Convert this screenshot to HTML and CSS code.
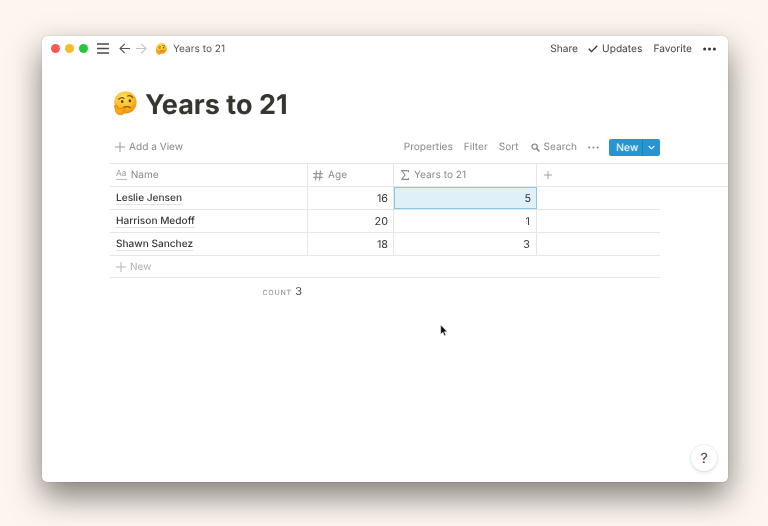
FILE: index.html
```html
<!DOCTYPE html>
<html lang="en">
<head>
<meta charset="utf-8">
<title>Years to 21</title>
<link rel="stylesheet" href="styles.css">
</head>
<body>
<svg class="defs" width="0" height="0" aria-hidden="true">
  <defs>
    <radialGradient id="face" cx="42%" cy="28%" r="80%">
      <stop offset="0" stop-color="#ffe25c"/>
      <stop offset="0.55" stop-color="#fdbd2c"/>
      <stop offset="1" stop-color="#ee8208"/>
    </radialGradient>
    <symbol id="think" viewBox="0 0 26 26">
      <circle cx="14" cy="11.8" r="11.6" fill="url(#face)"/>
      <path d="M7 8.5q3-2.6 5.6-.8M16.2 5.2q3.4-1 5.4 1.6" fill="none" stroke="#7a4a12" stroke-width="1.3" stroke-linecap="round"/>
      <ellipse cx="10.6" cy="11" rx="1.4" ry="1.6" fill="#5b3a14"/>
      <ellipse cx="18.6" cy="10.2" rx="1.4" ry="1.6" fill="#5b3a14"/>
      <path d="M12 17q3.5-1.4 7 .2" fill="none" stroke="#8a5212" stroke-width="1.3" stroke-linecap="round"/>
      <path d="M2.6 15.5q1.4-1.6 2.6-.2l1.6 3.4 6-1.2q2 .2 1.2 1.8l-2.6 1.2 1.2 1.6q-.4 2.4-3 2.6-4.4.4-5.6-3z" fill="#fda818" stroke="#dc7f0c" stroke-width=".8"/>
    </symbol>
  </defs>
</svg>
<div class="window">
  <header class="topbar">
    <div class="traffic">
      <span class="dot dot-red"></span>
      <span class="dot dot-yellow"></span>
      <span class="dot dot-green"></span>
    </div>
    <svg class="ic-menu" width="12" height="11" viewBox="0 0 12 11"><path d="M0 1h12M0 5.5h12M0 10h12" stroke="#4a4946" stroke-width="1.3" fill="none"/></svg>
    <svg class="ic-back" width="11" height="11" viewBox="0 0 11 11"><path d="M11 5.5H1M5.8.8L1 5.5l4.800 4.700" stroke="#55534f" stroke-width="1.100" fill="none"/></svg>
    <svg class="ic-fwd" width="11" height="11" viewBox="0 0 11 11"><path d="M0 5.500h10M5.200.8L10 5.500l-4.800 4.700" stroke="#c4c3c1" stroke-width="1.100" fill="none"/></svg>
    <svg class="emoji-small" width="12" height="12"><use href="#think"/></svg>
    <span class="crumb">Years to 21</span>
    <div class="top-actions">
      <span class="top-link share">Share</span>
      <span class="top-link updates">
        <svg width="10" height="8" viewBox="0 0 10 8"><path d="M.7 3.800l2.800 2.800L9.300.8" stroke="#37352f" stroke-width="1.300" fill="none"/></svg>
        Updates
      </span>
      <span class="top-link">Favorite</span>
      <svg class="more" width="13" height="4" viewBox="0 0 13 4"><circle cx="1.600" cy="2" r="1.500"/><circle cx="6.500" cy="2" r="1.500"/><circle cx="11.400" cy="2" r="1.500"/></svg>
    </div>
  </header>

  <main class="page">
    <h1 class="title">
      <svg class="emoji-big" width="25" height="25"><use href="#think"/></svg>
      <span>Years to 21</span>
    </h1>

    <div class="toolbar">
      <span class="add-view">
        <svg width="10" height="10" viewBox="0 0 10 10"><path d="M5 0v10M0 5h10" stroke="#9a9995" stroke-width="1" fill="none"/></svg>
        Add a View
      </span>
      <div class="tools">
        <span>Properties</span>
        <span>Filter</span>
        <span>Sort</span>
        <span class="search">
          <svg width="9" height="9" viewBox="0 0 10 10"><circle cx="4" cy="4" r="2.900" stroke="#807f7b" stroke-width="1.300" fill="none"/><path d="M6.200 6.200L9.400 9.400" stroke="#807f7b" stroke-width="1.500"/></svg>
          Search
        </span>
        <svg class="tool-more" width="11" height="3" viewBox="0 0 11 3"><circle cx="1.300" cy="1.500" r="1.100"/><circle cx="5.500" cy="1.500" r="1.100"/><circle cx="9.700" cy="1.500" r="1.100"/></svg>
        <div class="new-btn">
          <span class="new-label">New</span>
          <span class="new-caret"><svg width="7" height="5" viewBox="0 0 7 5"><path d="M.7 1l2.800 2.800L6.300 1" stroke="#fff" stroke-width="1.100" fill="none"/></svg></span>
        </div>
      </div>
    </div>

    <div class="table">
      <div class="row head">
        <div class="cell c-name">
          <span class="aa">Aa</span>Name
        </div>
        <div class="cell c-age">
          <svg width="10" height="11" viewBox="0 0 10 11"><path d="M3.500.5L2.500 10.500M7.500.5L6.500 10.500M.2 3.600h9.600M.2 7.400h9.600" stroke="#9a9996" stroke-width="1.300" fill="none"/></svg>
          Age
        </div>
        <div class="cell c-years">
          <svg width="8" height="10" viewBox="0 0 8 10"><path d="M7.600 2.300V.6H.7l3.300 4.400L.7 9.400h6.900V7.700" stroke="#8f8e8a" stroke-width="1.100" fill="none"/></svg>
          Years to 21
        </div>
        <div class="cell c-add">
          <svg width="8" height="8" viewBox="0 0 8 8"><path d="M4 0v8M0 4h8" stroke="#a3a29f" stroke-width="1" fill="none"/></svg>
        </div>
      </div>
      <div class="row">
        <div class="cell c-name"><span class="name">Leslie Jensen</span></div>
        <div class="cell c-age num">16</div>
        <div class="cell c-years num selected">5</div>
        <div class="cell c-rest"></div>
      </div>
      <div class="row">
        <div class="cell c-name"><span class="name">Harrison Medoff</span></div>
        <div class="cell c-age num">20</div>
        <div class="cell c-years num">1</div>
        <div class="cell c-rest"></div>
      </div>
      <div class="row">
        <div class="cell c-name"><span class="name">Shawn Sanchez</span></div>
        <div class="cell c-age num">18</div>
        <div class="cell c-years num">3</div>
        <div class="cell c-rest"></div>
      </div>
      <div class="new-row">
        <svg width="10" height="10" viewBox="0 0 10 10"><path d="M5 0v10M0 5h10" stroke="#b5b4b2" stroke-width="1" fill="none"/></svg>
        New
      </div>
      <div class="count"><span class="count-label">COUNT</span><span class="count-value">3</span></div>
    </div>
  </main>

  <svg class="cursor" width="8" height="13" viewBox="0 0 9 14"><path d="M.8.800v10.400l2.500-2.300 1.700 3.900 1.600-.7-1.700-3.800h3.300z" fill="#111" stroke="#fff" stroke-width=".5"/></svg>
  <div class="help">?</div>
</div>
</body>
</html>
```
FILE: styles.css
```css
* { box-sizing: border-box; }
html, body { height: 100%; }
body {
  margin: 0;
  padding: 36px 40px 44px 42px;
  background: #fdf6f0;
  overflow: hidden;
  font-family: Inter, "Liberation Sans", sans-serif;
  color: #37352f;
  text-rendering: geometricPrecision;
}
.defs { position: absolute; }
.window {
  position: relative;
  width: 686px;
  height: 446px;
  background: #fff;
  border-radius: 5px;
  box-shadow: 0 14px 32px rgba(50, 45, 40, .62), 0 0 1px rgba(0, 0, 0, .4);
}

/* top bar */
.topbar {
  display: flex;
  align-items: center;
  height: 25px;
  padding: 0 12px 0 9px;
  filter: blur(.3px);
}
.traffic { display: flex; gap: 5px; }
.dot { width: 9px; height: 9px; border-radius: 50%; }
.dot-red { background: #fc5753; }
.dot-yellow { background: #fdb82c; }
.dot-green { background: #28c63f; }
.ic-menu { margin-left: 9px; }
.ic-back { margin-left: 10px; }
.ic-fwd { margin-left: 6px; }
.emoji-small { margin-left: 8px; }
.crumb { margin-left: 6px; font-size: 10.1px; color: #55534e; }
.top-actions { margin-left: auto; display: flex; align-items: center; gap: 11px; }
.top-link { font-size: 10.2px; color: #45433e; display: flex; align-items: center; gap: 4px; }
.share { margin-right: -1px; }
.more { fill: #37352f; }

/* page */
.page { padding-left: 68px; filter: blur(.3px); }
.title {
  display: flex;
  align-items: center;
  gap: 8px;
  height: 62px;
  margin: 0;
  padding: 25px 0 0 2px;
  font-size: 27px;
  line-height: 34px;
  font-weight: 700;
  color: #37352f;
}
.emoji-big { margin-bottom: 3px; }
.toolbar {
  display: flex;
  align-items: center;
  justify-content: space-between;
  width: 550px;
  height: 24px;
  margin-top: 12px;
  font-size: 10.1px;
  color: #8a8985;
}
.add-view { display: flex; align-items: center; gap: 4px; padding-left: 5px; }
.tools { display: flex; align-items: center; gap: 11px; }
.search { display: flex; align-items: center; gap: 4px; margin-left: 1px; }
.tool-more { fill: #8a8985; margin-right: -1px; }
.new-btn {
  display: flex;
  align-items: center;
  width: 51px;
  height: 17px;
  background: #2795d2;
  border-radius: 2px;
  color: #fff;
  font-size: 10.4px;
}
.new-label { width: 33px; padding-left: 7px; }
.new-caret {
  display: flex;
  align-items: center;
  justify-content: center;
  width: 18px;
  height: 17px;
  border-left: 1px solid #1f80b8;
}

/* table */
.table { margin-top: 4px; }
.row {
  display: flex;
  width: 550px;
  height: 23px;
  border-bottom: 1px solid #e6e6e5;
}
.row.head {
  width: 618px;
  height: 24px;
  border-top: 1px solid #e6e6e5;
}
.cell {
  display: flex;
  align-items: center;
  font-size: 10.1px;
  border-right: 1px solid #e6e6e5;
  padding: 0 6px;
}
.head .cell { color: #8a8985; gap: 5px; }
.c-name { width: 198px; }
.c-age { width: 86px; padding: 0 5px; }
.c-years { width: 143px; }
.head .c-years { padding-left: 7px; }
.c-rest, .c-add { flex: 1; border-right: 0; }
.c-add { padding-left: 7px; }
.aa {
  font-size: 8.5px;
  color: #a6a5a2;
  border-bottom: 1px solid #bdbcba;
  line-height: 9px;
  margin-right: -1px;
}
.name {
  font-size: 10.1px;
  font-weight: 500;
  color: #37352f;
  border-bottom: 1px solid #e4e3e1;
  line-height: 12px;
}
.num { justify-content: flex-end; font-size: 10.8px; color: #37352f; }
.selected {
  background: #dff0f8;
  box-shadow: inset 0 0 0 1px #8cc6e4;
  border-right: 0;
}
.new-row {
  display: flex;
  align-items: center;
  gap: 4px;
  width: 550px;
  height: 22px;
  padding-left: 6px;
  font-size: 10px;
  color: #b0afac;
  border-bottom: 1px solid #e6e6e5;
}
.count {
  display: flex;
  align-items: baseline;
  justify-content: flex-end;
  gap: 3.5px;
  width: 192px;
  height: 24px;
  padding-top: 5.5px;
}
.count-label { font-size: 7.1px; letter-spacing: .7px; color: #8a8985; }
.count-value { font-size: 11px; color: #45433e; }

/* overlays */
.cursor { position: absolute; left: 398px; top: 288px; }
.help {
  position: absolute;
  right: 11px;
  bottom: 11px;
  width: 26px;
  height: 26px;
  display: flex;
  align-items: center;
  justify-content: center;
  border-radius: 50%;
  background: #fff;
  font-size: 14px;
  color: #45433e;
  box-shadow: 0 0 0 1px rgba(15, 15, 15, .05), 0 2px 4px rgba(15, 15, 15, .1);
}
```
